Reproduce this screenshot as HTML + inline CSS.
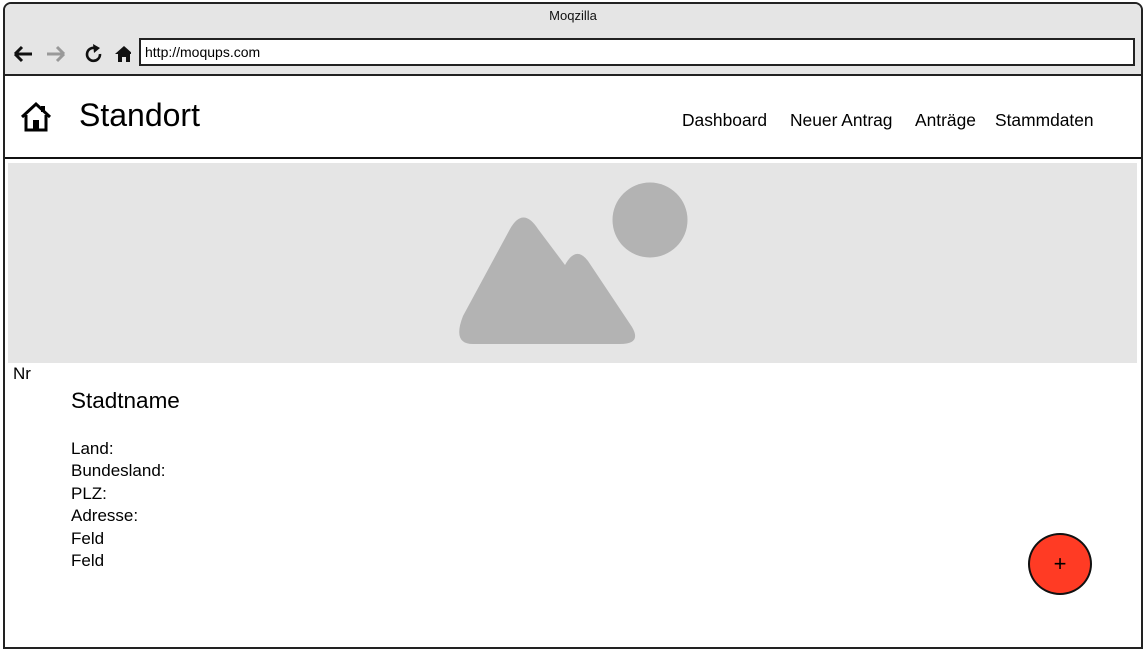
<!DOCTYPE html>
<html><head><meta charset="utf-8"><style>
body{margin:0;width:1148px;height:652px;background:#fff;font-family:"Liberation Sans",Arial,sans-serif;position:relative;overflow:hidden}
.frame{position:absolute;left:3px;top:2px;width:1136px;height:643px;border:2px solid #222;border-radius:8px 8px 0 0;background:#fff}
.tb{position:absolute;left:0;top:0;right:0;height:70px;background:#e5e5e5;border-bottom:2px solid #222;border-radius:6px 6px 0 0}
.title{position:absolute;left:0;right:0;top:4px;text-align:center;font-size:13px;color:#111}
.url{position:absolute;left:134px;top:34px;width:988px;height:24px;border:2px solid #222;background:#fff;font-size:14px;line-height:24px;padding-left:4px;box-sizing:content-box}
.hdr{position:absolute;left:0;top:72px;right:0;height:81px;border-bottom:2px solid #111}
.h1{position:absolute;left:74px;top:21px;font-size:32px;color:#000}
.nav{position:absolute;top:34px;font-size:17.4px;color:#000}
.img{position:absolute;left:3px;top:159px;width:1129px;height:200px;background:#e5e5e5}
.t{position:absolute;font-size:17px;color:#000}
.fab{position:absolute;left:1023px;top:529px;width:60px;height:58px;border:2px solid #111;border-radius:50%;background:#ff3b24;text-align:center;line-height:57px;font-size:22px}
</style></head><body>
<div class="frame">
 <div class="tb">
  <div class="title">Moqzilla</div>
  <svg style="position:absolute;left:6px;top:39px" width="120" height="22" viewBox="0 0 120 22">
   <path d="M4 11H21M4 11L11 4M4 11L11 18" stroke="#111" stroke-width="3" fill="none"/>
   <path d="M53 11H36M53 11L46 4M53 11L46 18" stroke="#999" stroke-width="3" fill="none"/>
   <path d="M89 11A6.5 6.5 0 1 1 84 5" stroke="#111" stroke-width="2.6" fill="none"/>
   <path d="M82 1L89 5L83 10Z" fill="#111"/>
   <path d="M104 11L113 3L122 11H119V19H107V11Z" fill="#111"/>
   <rect x="111" y="14" width="4" height="5" fill="#e5e5e5"/>
  </svg>
  <div class="url">http://moqups.com</div>
 </div>
 <div class="hdr">
  <svg style="position:absolute;left:15px;top:25px" width="32" height="32" viewBox="0 0 32 32">
   <path d="M2 16L16 3L30 16" stroke="#000" stroke-width="3" fill="none"/>
   <path d="M6 14V29H26V14" stroke="#000" stroke-width="3" fill="none"/>
   <rect x="13" y="19" width="6" height="10" fill="#000"/>
   <rect x="21" y="5" width="4" height="6" fill="#000"/>
  </svg>
  <div class="h1">Standort</div>
  <div class="nav" style="left:677px">Dashboard</div>
  <div class="nav" style="left:785px">Neuer Antrag</div>
  <div class="nav" style="left:910px">Anträge</div>
  <div class="nav" style="left:990px">Stammdaten</div>
 </div>
 <div class="img">
  <svg style="position:absolute;left:440px;top:18px" width="250" height="170" viewBox="0 0 250 170">
   <circle cx="202" cy="39" r="37.5" fill="#b3b3b3"/>
   <path d="M15 135L62 48Q75 25 90 48L117 84Q128 64 140 80L184 146Q194 163 172 163H25Q4 163 15 135Z" fill="#b3b3b3"/>
  </svg>
 </div>
 <div class="t" style="left:8px;top:360px">Nr</div>
 <div class="t" style="left:66px;top:384px;font-size:22.5px">Stadtname</div>
 <div class="t" style="left:66px;top:434px;line-height:22.4px">Land:<br>Bundesland:<br>PLZ:<br>Adresse:<br>Feld<br>Feld</div>
 <div class="fab">+</div>
</div>
</body></html>
